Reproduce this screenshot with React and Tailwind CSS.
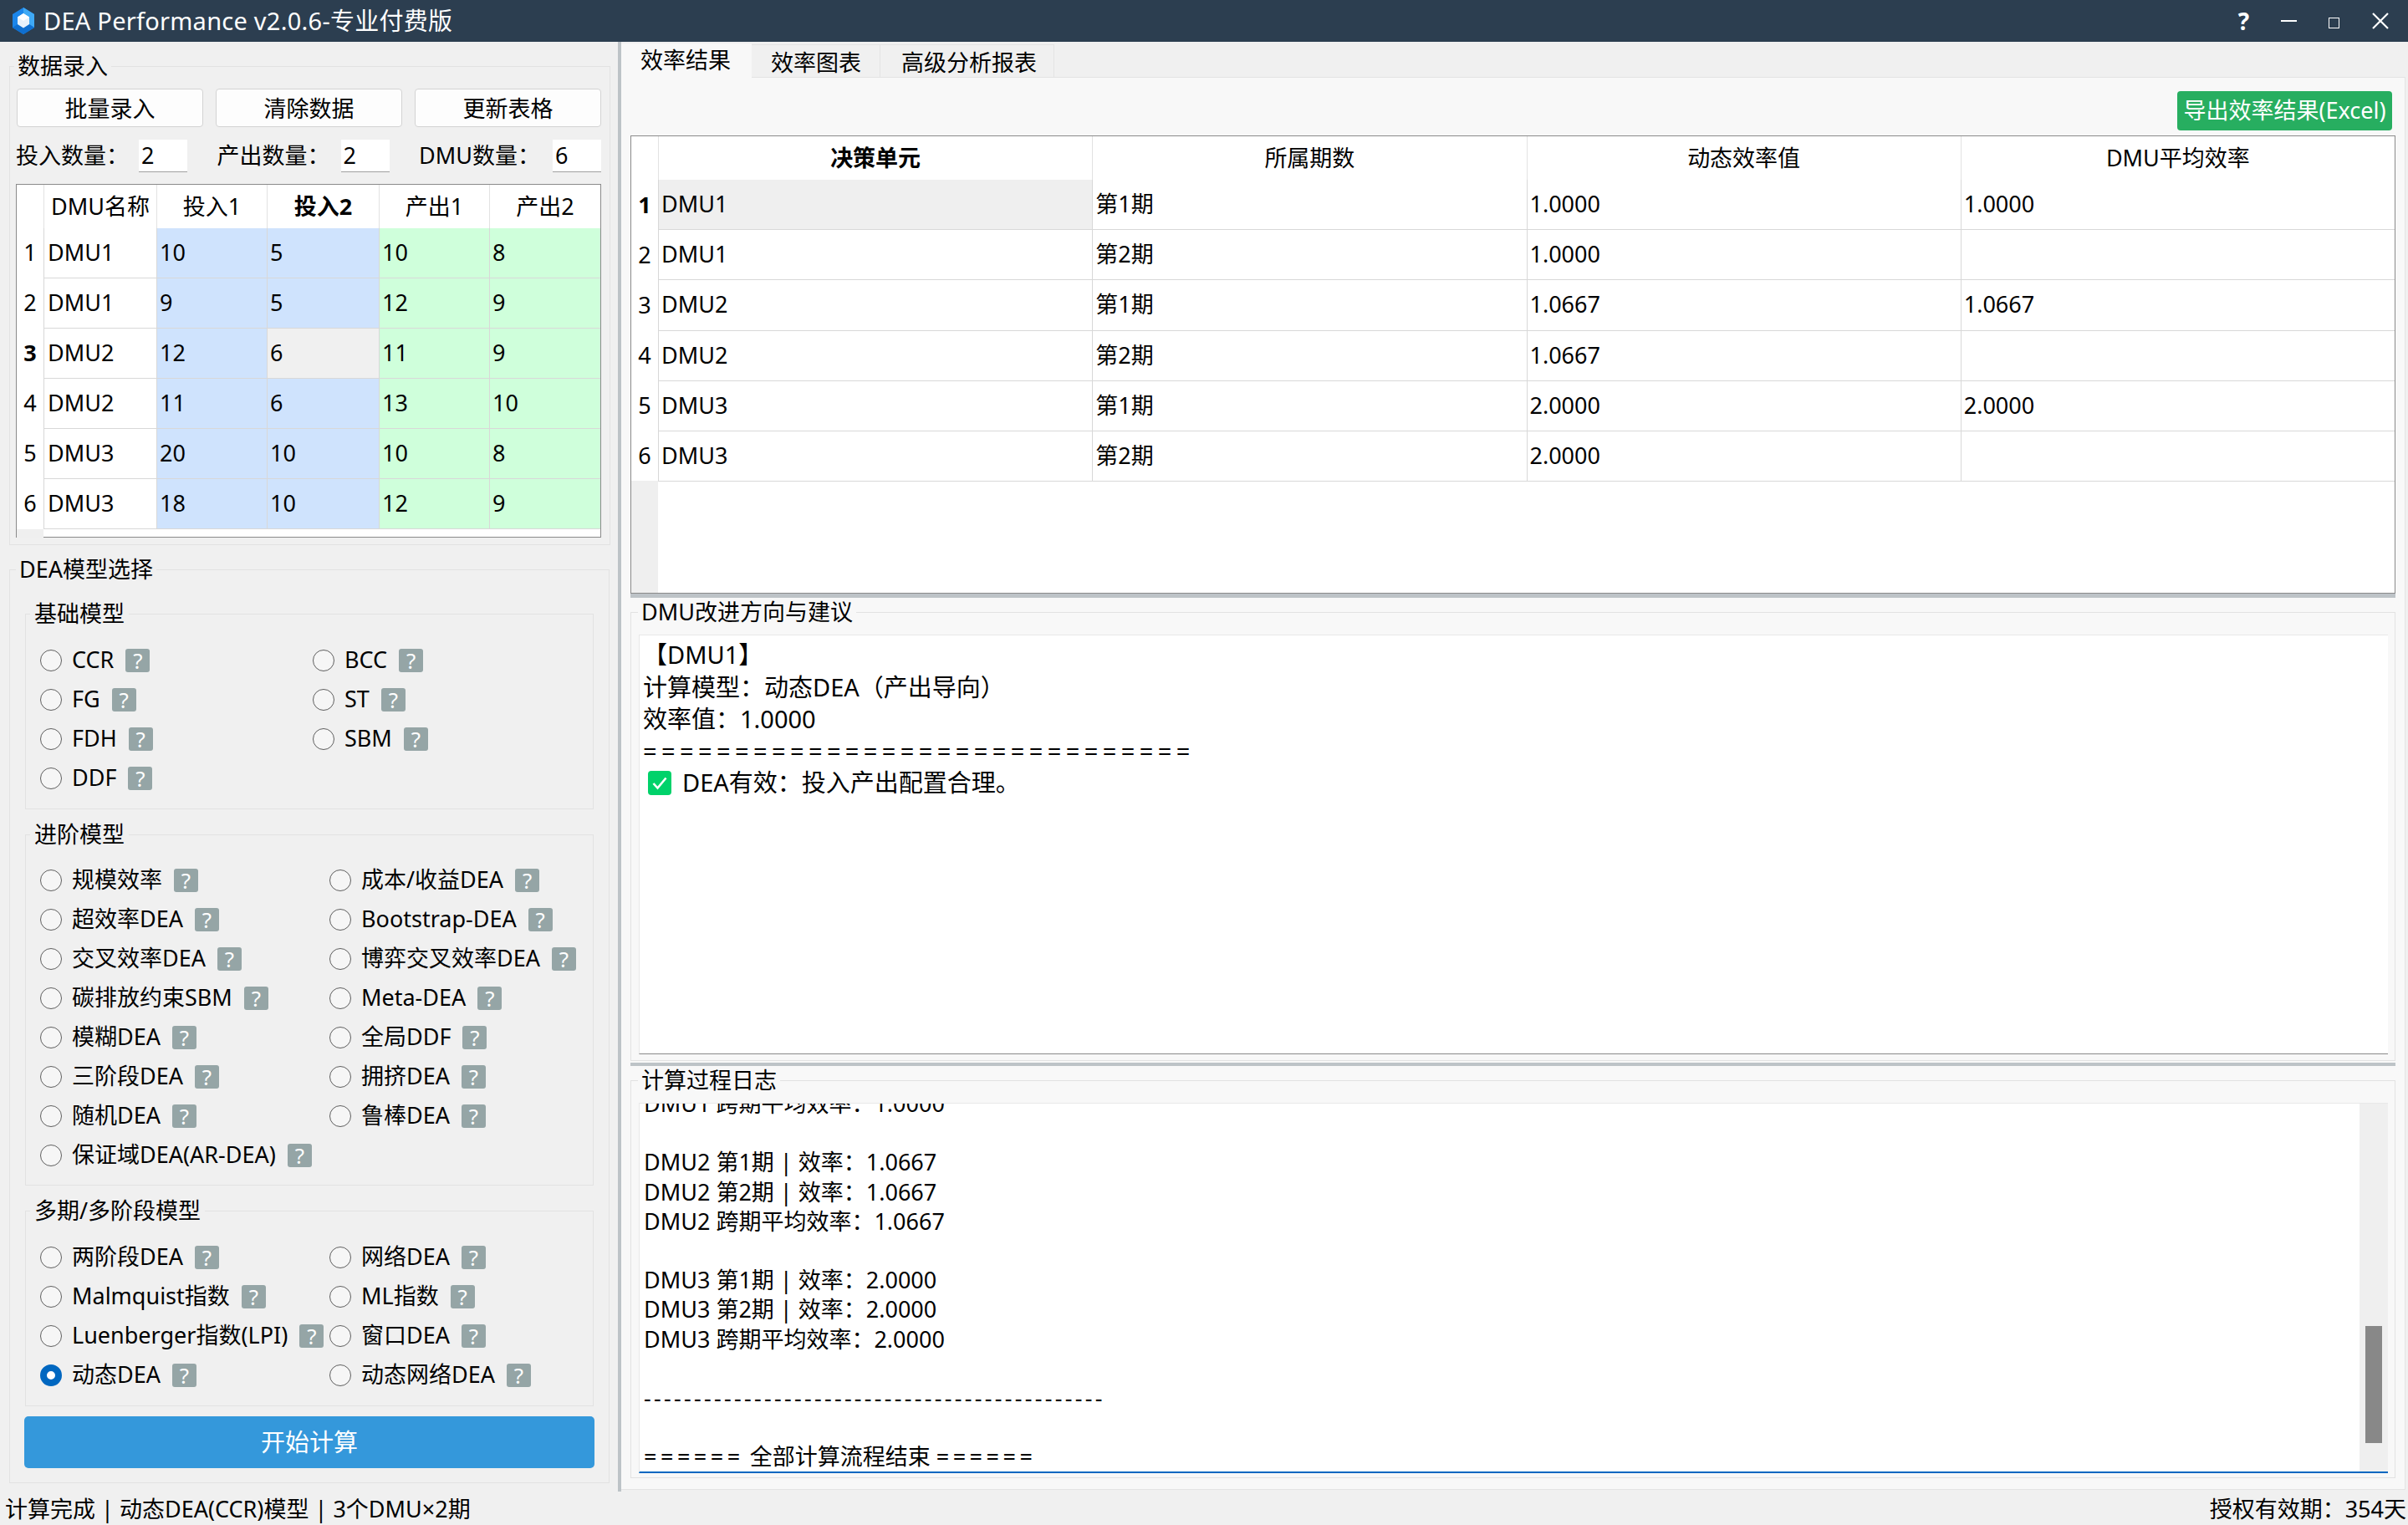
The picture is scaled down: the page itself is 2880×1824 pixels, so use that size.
const cols = 'grid grid-cols-[32px_135px_132px_134px_132px_133px]';

const inputRows = [
  ['DMU1', '10', '5', '10', '8'],
  ['DMU1', '9', '5', '12', '9'],
  ['DMU2', '12', '6', '11', '9'],
  ['DMU2', '11', '6', '13', '10'],
  ['DMU3', '20', '10', '10', '8'],
  ['DMU3', '18', '10', '12', '9'],
];

const resultRows = [
  ['DMU1', '第1期', '1.0000', '1.0000'],
  ['DMU1', '第2期', '1.0000', ''],
  ['DMU2', '第1期', '1.0667', '1.0667'],
  ['DMU2', '第2期', '1.0667', ''],
  ['DMU3', '第1期', '2.0000', '2.0000'],
  ['DMU3', '第2期', '2.0000', ''],
];

const basicModels = ['CCR', 'BCC', 'FG', 'ST', 'FDH', 'SBM', 'DDF'];
const advancedModels = [
  '规模效率', '成本/收益DEA', '超效率DEA', 'Bootstrap-DEA', '交叉效率DEA', '博弈交叉效率DEA',
  '碳排放约束SBM', 'Meta-DEA', '模糊DEA', '全局DDF', '三阶段DEA', '拥挤DEA',
  '随机DEA', '鲁棒DEA', '保证域DEA(AR-DEA)',
];
const periodModels = [
  '两阶段DEA', '网络DEA', 'Malmquist指数', 'ML指数', 'Luenberger指数(LPI)', '窗口DEA', '动态DEA', '动态网络DEA',
];

const Logo = () => (
  <svg viewBox="0 0 26 32" className="ml-[15px] h-[32px] w-[26px] shrink-0">
    <polygon points="13,0 26,8 26,24 13,32 0,24 0,8" fill="#1c86ea" />
    <polygon points="13,0 26,8 26,24 20,20 20,12 13,7" fill="#3fa9f5" />
    <polygon points="0,24 13,32 26,24 20,20 13,24 6,20" fill="#0f6fd0" />
    <polygon points="13,7 20,11.5 20,20 13,24.5 6,20 6,11.5" fill="#e8f1fb" />
    <polygon points="13,7 20,11.5 13,16 6,11.5" fill="#ffffff" />
  </svg>
);

// legend sits on the top border, its line height decides where the border runs
const Group = ({ title, className = '', legendClass = 'ml-[7px] px-1 leading-[36px]', children }) => (
  <fieldset className={`border border-[#e2e2e2] ${className}`}>
    <legend className={legendClass}>{title}</legend>
    {children}
  </fieldset>
);

const ToolButton = ({ children }) => (
  <button className="h-[46px] rounded-[4px] border border-[#d3d3d3] bg-[#fdfdfd] text-[27px] leading-none">
    {children}
  </button>
);

const CountField = ({ label, value, width }) => (
  <div className={`flex h-[39px] items-center justify-between ${width}`}>
    <span className="-ml-px">{label}</span>
    <div className="flex h-[39px] w-[58px] items-center border-b border-[#a0a0a0] bg-white pl-[3px]">{value}</div>
  </div>
);

const InputTable = () => (
  <div className="mt-[14px] -ml-px h-[423px] w-[700px] border border-[#8a8a8a] bg-white">
    <div className={`${cols} h-[52px] text-center leading-[52px]`}>
      <div />
      <div className="border-l border-[#e2e2e2] whitespace-nowrap">DMU名称</div>
      <div className="border-l border-[#e2e2e2]">投入1</div>
      <div className="border-l border-[#e2e2e2] font-bold">投入2</div>
      <div className="border-l border-[#e2e2e2]">产出1</div>
      <div className="border-l border-[#e2e2e2]">产出2</div>
    </div>
    {inputRows.map((row, i) => (
      <div key={i} className={`${cols} h-[60px] leading-[57px]`}>
        <div className={`text-center ${i === 2 ? 'font-bold' : ''}`}>{i + 1}</div>
        <div className="border-b border-l border-[#d8d8d8] pl-[4px]">{row[0]}</div>
        <div className="border-b border-l border-[#d8d8d8] bg-[#cfe3fd] pl-[3px]">{row[1]}</div>
        <div className={`border-b border-l border-[#d8d8d8] pl-[3px] ${i === 2 ? 'bg-[#f0f0f0]' : 'bg-[#cfe3fd]'}`}>{row[2]}</div>
        <div className="border-b border-l border-[#d8d8d8] bg-[#cfffdb] pl-[3px]">{row[3]}</div>
        <div className="border-b border-l border-[#d8d8d8] bg-[#cfffdb] pl-[3px]">{row[4]}</div>
      </div>
    ))}
    <div className="h-[10px] w-[32px] bg-[#efefef]" />
  </div>
);

const Radio = ({ label, checked }) => (
  <label className="flex h-[47px] items-center whitespace-nowrap">
    <span
      className={
        checked
          ? 'h-[26px] w-[26px] shrink-0 rounded-full border-[8px] border-[#0067c0] bg-white'
          : 'h-[26px] w-[26px] shrink-0 rounded-full border-[1.5px] border-[#5f5f5f] bg-[#f6f6f6]'
      }
    />
    <span className="ml-[12px]">{label}</span>
    <span className="ml-[14px] flex h-[28px] w-[29px] shrink-0 items-center justify-center rounded-[3px] bg-[#95a5a6] text-[26px] leading-none text-white">
      ?
    </span>
  </label>
);

const ModelGroup = ({ title, models, columns, checked }) => (
  <Group
    title={title}
    className="mx-[18px] pl-[17px]"
    legendClass="-ml-[12px] px-[5px] leading-[36px]"
  >
    <div className={`grid ${columns}`}>
      {models.map((m) => (
        <Radio key={m} label={m} checked={m === checked} />
      ))}
    </div>
  </Group>
);

const LeftPanel = () => (
  <div className="flex w-[743px] shrink-0 flex-col border-r-4 border-[#bdc3c7] pt-[11px] pl-[11px]">
    <Group
      title="数据录入"
      className="w-[718px] pr-[10px] pb-[8px] pl-[8px]"
      legendClass="-ml-[3px] px-1 leading-[36px]"
    >
      <div className="mt-[9px] grid grid-cols-3 gap-[15px]">
        <ToolButton>批量录入</ToolButton>
        <ToolButton>清除数据</ToolButton>
        <ToolButton>更新表格</ToolButton>
      </div>
      <div className="mt-[15px] flex justify-between">
        <CountField label="投入数量：" value="2" width="w-[204px]" />
        <CountField label="产出数量：" value="2" width="w-[205px]" />
        <CountField label="DMU数量：" value="6" width="w-[217px]" />
      </div>
      <InputTable />
    </Group>

    <Group title="DEA模型选择" className="mt-[11px] w-[718px] pb-[17px]">
      <div className="h-[17px]" />
      <ModelGroup
        title="基础模型"
        models={basicModels}
        columns="grid-cols-[326px_1fr] pt-[14px] pb-[13px]"
      />
      <div className="h-[12px]" />
      <ModelGroup
        title="进阶模型"
        models={advancedModels}
        columns="grid-cols-[346px_1fr] pt-[13px] pb-[12px]"
      />
      <div className="h-[12px]" />
      <ModelGroup
        title="多期/多阶段模型"
        models={periodModels}
        columns="grid-cols-[346px_1fr] pt-[14px] pb-[13px]"
        checked="动态DEA"
      />
      <button className="mx-[17px] mt-[12px] h-[62px] w-[682px] rounded-[5px] bg-[#3498db] text-[29px] text-white">
        开始计算
      </button>
    </Group>
  </div>
);

const ResultTable = () => (
  <div className="mt-[6px] h-[548px] shrink-0 border border-[#8a8a8a] bg-white">
    <div className="grid h-full grid-cols-[32px_1fr]">
      <div className="flex flex-col">
        <div className="h-[52px]" />
        {resultRows.map((_, i) => (
          <div key={i} className={`h-[60px] text-center leading-[60px] ${i === 0 ? 'font-bold' : ''}`}>
            {i + 1}
          </div>
        ))}
        <div className="flex-1 bg-[#efefef]" />
      </div>
      <div>
        <div className="grid h-[52px] grid-cols-4 text-center leading-[52px]">
          <div className="border-l border-[#e2e2e2] font-bold">决策单元</div>
          <div className="border-l border-[#e2e2e2]">所属期数</div>
          <div className="border-l border-[#e2e2e2]">动态效率值</div>
          <div className="border-l border-[#e2e2e2]">DMU平均效率</div>
        </div>
        {resultRows.map((row, i) => (
          <div key={i} className="grid h-[60.2px] grid-cols-4 leading-[58px]">
            <div className={`border-b border-l border-[#d8d8d8] pl-[3px] ${i === 0 ? 'bg-[#efefef]' : ''}`}>{row[0]}</div>
            <div className="border-b border-l border-[#d8d8d8] pl-[3px]">{row[1]}</div>
            <div className="border-b border-l border-[#d8d8d8] pl-[3px]">{row[2]}</div>
            <div className="border-b border-l border-[#d8d8d8] pl-[3px]">{row[3]}</div>
          </div>
        ))}
      </div>
    </div>
  </div>
);

const Advice = () => (
  <Group
    title="DMU改进方向与建议"
    className="pr-[8px] pb-[7px] pl-[9px]"
    legendClass="-ml-px px-1 leading-[34px]"
  >
    <div className="mt-[10px] h-[502px] border-t border-b border-l border-t-[#e8e8e8] border-b-[#8a8a8a] border-l-[#e8e8e8] bg-white pt-[3px] pl-[4px] text-[29px] leading-[38px]">
      <div className="leading-[40px]">【DMU1】</div>
      <div>计算模型：动态DEA（产出导向）</div>
      <div>效率值：1.0000</div>
      <div className="tracking-[5.4px]">{'='.repeat(30)}</div>
      <div className="flex items-center">
        <svg viewBox="0 0 28 29" className="ml-[6px] h-[29px] w-[28px]">
          <rect width="28" height="29" rx="4" fill="#00d26a" />
          <path d="M6.5 15l5 5.5 10-12" fill="none" stroke="#fff" strokeWidth="2.6" />
        </svg>
        <span className="ml-[13px]">DEA有效：投入产出配置合理。</span>
      </div>
    </div>
  </Group>
);

const logLines = [
  'DMU1 跨期平均效率：1.0000',
  '',
  'DMU2 第1期 | 效率：1.0667',
  'DMU2 第2期 | 效率：1.0667',
  'DMU2 跨期平均效率：1.0667',
  '',
  'DMU3 第1期 | 效率：2.0000',
  'DMU3 第2期 | 效率：2.0000',
  'DMU3 跨期平均效率：2.0000',
  '',
  '-'.repeat(46),
  '',
];

const LogPanel = () => (
  <Group
    title="计算过程日志"
    className="pr-[8px] pb-[5px] pl-[9px]"
    legendClass="-ml-px px-1 leading-[34px]"
  >
    <div className="mt-[10px] flex h-[443px] border-t border-b-2 border-l border-t-[#e8e8e8] border-b-[#0067c0] border-l-[#e8e8e8] bg-white">
      <div className="flex-1 overflow-hidden pl-[5px]">
        <div className="-mt-[18px] leading-[35.2px]">
          {logLines.map((line, i) => (
            <div key={i} className={`h-[35.2px] ${line.startsWith('-') ? 'tracking-[3.3px]' : ''}`}>
              {line}
            </div>
          ))}
          <div>
            <span className="tracking-[4.5px]">======</span> 全部计算流程结束 <span className="tracking-[4.5px]">======</span>
          </div>
        </div>
      </div>
      <div className="w-[34px] shrink-0 bg-[#efefef] px-[7px] pt-[266px]">
        <div className="h-[140px] bg-[#888888]" />
      </div>
    </div>
  </Group>
);

const RightPanel = () => (
  <div className="flex min-w-0 flex-1 flex-col pr-[3px] pb-[2px]">
    <div className="flex h-[42px] shrink-0">
      <div className="z-10 mt-[2px] h-[41px] w-[156px] bg-[#f8f8f8] pl-[23px] leading-[40px]">效率结果</div>
      <div className="mt-[3px] h-[39px] w-[154px] border-t border-r border-[#e4e4e4] pl-[23px] leading-[42px]">效率图表</div>
      <div className="mt-[3px] h-[39px] w-[208px] border-t border-r border-[#e4e4e4] pl-[25px] leading-[42px]">高级分析报表</div>
    </div>
    <div className="flex min-h-0 flex-1 flex-col border-t border-r border-b border-[#e4e4e4] bg-[#f8f8f8] px-[11px]">
      <div className="mt-[16px] flex justify-end pr-[4px]">
        <button className="h-[47px] w-[257px] rounded-[4px] bg-[#27ae60] text-[27px] whitespace-nowrap text-white">
          导出效率结果(Excel)
        </button>
      </div>
      <ResultTable />
      <div className="h-[5px] shrink-0 bg-[#bdc3c7]" />
      <Advice />
      <div className="mt-[2px] h-[4px] shrink-0 bg-[#bdc3c7]" />
      <LogPanel />
    </div>
  </div>
);

export default function App() {
  return (
    <div className="flex h-[1824px] w-[2880px] flex-col overflow-hidden bg-[#f0f0f0] font-['Noto_Sans','Noto_Sans_CJK_SC',sans-serif] text-[27px] text-black">
      <div className="flex h-[50px] shrink-0 items-center bg-[#2c3e50] text-white">
        <Logo />
        <span className="ml-[11px] text-[29px] tracking-[0.25px]">DEA Performance v2.0.6-专业付费版</span>
        <div className="ml-auto flex items-center">
          <span className="text-[28px] font-bold">?</span>
          <span className="ml-[38px] h-[2px] w-[19px] bg-white" />
          <span className="mt-[4px] ml-[38px] h-[13px] w-[13px] border border-white" />
          <svg viewBox="0 0 20 20" className="mr-[23px] ml-[39px] h-[20px] w-[20px]">
            <path d="M1 1l18 18M19 1L1 19" stroke="#fff" strokeWidth="2.2" />
          </svg>
        </div>
      </div>
      <div className="flex min-h-0 flex-1">
        <LeftPanel />
        <RightPanel />
      </div>
      <div className="flex h-[40px] shrink-0 items-center justify-between pt-[2px] pr-[2px] pl-[6px]">
        <span>计算完成 | 动态DEA(CCR)模型 | 3个DMU×2期</span>
        <span>授权有效期：354天</span>
      </div>
    </div>
  );
}
